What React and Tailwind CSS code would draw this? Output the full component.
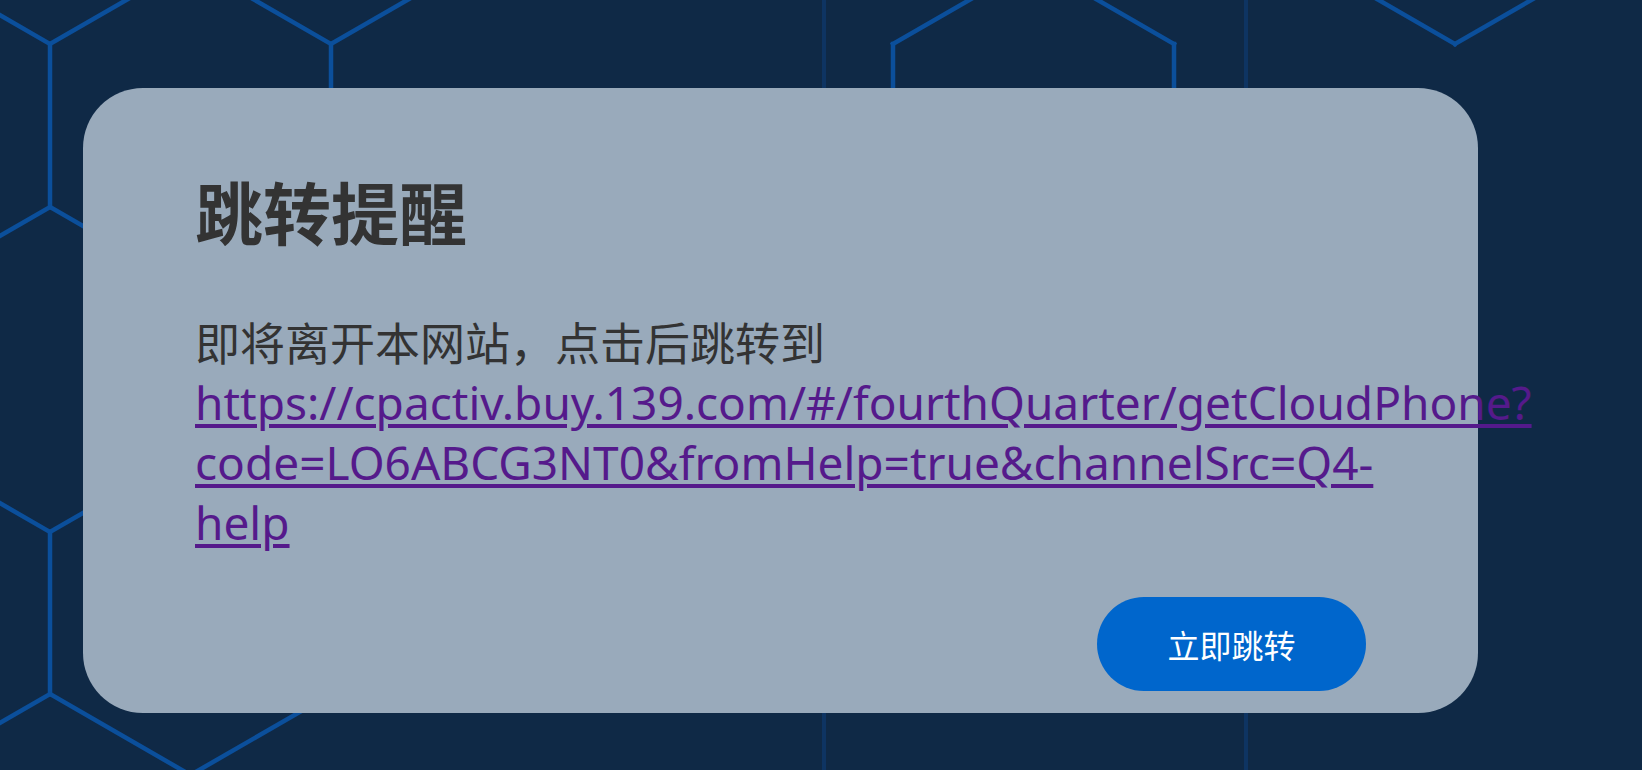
import React from "react";

const LINE = "#0b4f9b";
const DIM = "#0e3462";

// hexagon edges of the backdrop, drawn as separate segments
const segments = [
  [-90.5, -37, 50, 44],
  [50, 44, 190.5, -37],
  [190.5, -37, 331, 44],
  [331, 44, 471.5, -37],
  [50, 44, 50, 207],
  [331, 44, 331, 207],
  [50, 207, -90.5, 288],
  [50, 207, 190.5, 288],
  [-90.5, 451, 50, 532],
  [50, 532, 190.5, 451],
  [50, 532, 50, 694],
  [50, 694, -90.5, 775],
  [50, 694, 190.5, 775],
  [190.5, 775, 331, 694],
  [893, 44, 1033.5, -37],
  [1033.5, -37, 1174, 44],
  [893, 44, 893, 207],
  [1174, 44, 1174, 207],
  [1314.5, -37, 1455, 44],
  [1455, 44, 1595.5, -37],
];

function HexBackdrop() {
  return (
    <svg
      className="absolute inset-0"
      width="1642"
      height="770"
      viewBox="0 0 1642 770"
      fill="none"
    >
      <line x1="824" y1="0" x2="824" y2="770" stroke={DIM} strokeWidth="4" />
      <line x1="1246" y1="0" x2="1246" y2="770" stroke={DIM} strokeWidth="4" />
      {segments.map(([x1, y1, x2, y2], i) => (
        <line
          key={i}
          x1={x1}
          y1={y1}
          x2={x2}
          y2={y2}
          stroke={LINE}
          strokeWidth="4.5"
          strokeLinecap="square"
        />
      ))}
    </svg>
  );
}

export default function App() {
  const url =
    "https://cpactiv.buy.139.com/#/fourthQuarter/getCloudPhone?code=LO6ABCG3NT0&fromHelp=true&channelSrc=Q4-help";

  return (
    <div className="relative h-[770px] w-full overflow-hidden bg-[#0f2946] pl-[83px] pt-[88px]">
      <HexBackdrop />

      <div className="relative flex h-[625px] w-[1395px] flex-col rounded-[60px] bg-[#99aabb] px-[112px] pt-[89px] pb-[22px]">
        <h1 className="font-['Noto_Sans_CJK_SC',sans-serif] text-[68px] leading-[68px] font-bold text-[#333]">
          跳转提醒
        </h1>

        <p className="mt-[65px] font-['Noto_Sans_CJK_SC',sans-serif] text-[45px] leading-[63px] text-[#333]">
          即将离开本网站，点击后跳转到
        </p>
        <a
          href={url}
          className="-mt-px block font-['Noto_Sans','Noto_Sans_CJK_SC',sans-serif] text-[46px] leading-[60px] text-[#551a8b] underline decoration-[4px] underline-offset-[4px]"
        >
          {url}
        </a>

        <button className="mt-auto flex h-[94px] w-[269px] items-center justify-center self-end rounded-full bg-[#0066cc] font-['Noto_Sans_CJK_SC',sans-serif] text-[32px] text-white">
          立即跳转
        </button>
      </div>
    </div>
  );
}
